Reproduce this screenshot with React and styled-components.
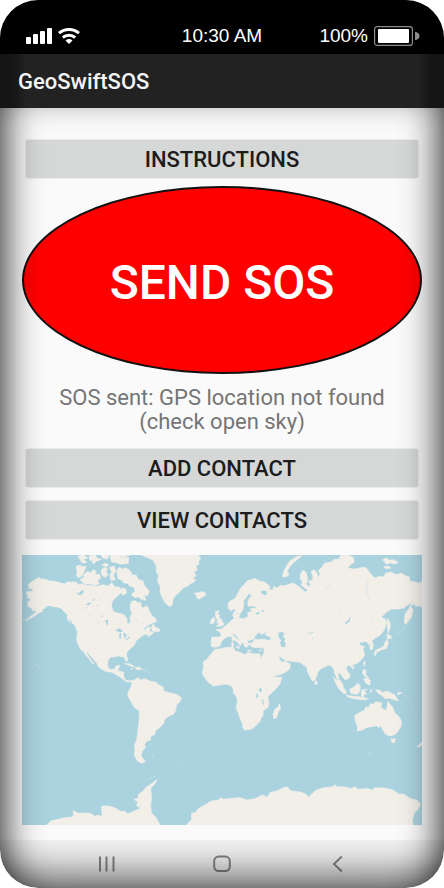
import React, { useState } from "react";
import styled, { createGlobalStyle } from "styled-components";

const App = () => {
  const [status] = useState("SOS sent: GPS location not found (check open sky)");

  return (
    <Phone>
      <GlobalStyle />
      <StatusBar>
        <Signals>
          <SignalIcon />
          <WifiIcon />
        </Signals>
        <span>10:30 AM</span>
        <Power>
          <span>100%</span>
          <BatteryIcon />
        </Power>
      </StatusBar>
      <Screen>
        <AppBar>
          <Title>GeoSwiftSOS</Title>
        </AppBar>
        <Content>
          <BarButton type="button">INSTRUCTIONS</BarButton>
          <SosButton type="button">SEND SOS</SosButton>
          <Message>{status}</Message>
          <ButtonStack>
            <BarButton type="button">ADD CONTACT</BarButton>
            <BarButton type="button">VIEW CONTACTS</BarButton>
          </ButtonStack>
          <WorldMap />
        </Content>
        <NavBar>
          <NavButton type="button" aria-label="Recent apps">
            <svg width="18" height="18" viewBox="0 0 18 18">
              <path d="M3 1.5v15M9.5 1.5v15M16.5 1.5v15" />
            </svg>
          </NavButton>
          <NavButton type="button" aria-label="Home">
            <svg width="18" height="18" viewBox="0 0 18 18">
              <rect x="1.2" y="1.6" width="15.6" height="14.4" rx="4.5" />
            </svg>
          </NavButton>
          <NavButton type="button" aria-label="Back">
            <svg width="18" height="18" viewBox="0 0 18 18">
              <path d="M12.8 1.6L5 9l7.800 7.400" />
            </svg>
          </NavButton>
        </NavBar>
        <EdgeShade />
      </Screen>
    </Phone>
  );
};

const SignalIcon = () => (
  <svg width="26" height="16" viewBox="0 0 26 16" fill="#fff">
    <rect x="0" y="9" width="5" height="7" rx="1" />
    <rect x="7" y="6" width="5" height="10" rx="1" />
    <rect x="14" y="3" width="5" height="13" rx="1" />
    <rect x="21" y="0" width="5" height="16" rx="1" />
  </svg>
);

const WifiIcon = () => (
  <svg width="22" height="16" viewBox="0 0 22 16" fill="none" stroke="#fff">
    <path d="M1 5.2C6.7 0.2 15.3 0.2 21 5.2" strokeWidth="3" />
    <path d="M4.8 9.5C8.3 6.5 13.7 6.5 17.2 9.5" strokeWidth="3" />
    <path d="M11 16L7.500 12.500Q11 9.700 14.500 12.500Z" fill="#fff" stroke="none" />
  </svg>
);

const BatteryIcon = () => (
  <svg width="46" height="20" viewBox="0 0 46 20">
    <rect x="0.6" y="0.6" width="37.8" height="18.8" rx="2.5" fill="none" stroke="#8c8c8c" strokeWidth="1.2" />
    <rect x="4" y="3" width="31" height="14" rx="1" fill="#fff" />
    <path d="M41 6c6 0 6 8 0 8z" fill="#8c8c8c" />
  </svg>
);

const land = [
  // north america
  "M40 104L47 98 55 92 63 88 70 82 78 87 90 88 104 93 120 94 136 99 150 102 158 95 165 97 180 95 190 103 202 102 215 106 235 108 250 108 262 104 280 108 290 98 300 110 315 112 320 126 305 140 294 150 290 162 290 172 296 185 310 190 320 192 328 196 336 206 336 218 342 222 346 214 345 200 351 190 345 175 347 162 350 154 362 152 368 158 378 158 378 168 385 174 392 168 398 170 402 182 410 196 422 206 425 214 412 220 398 226 384 238 390 240 400 230 407 233 402 244 412 246 420 242 414 250 400 260 396 252 386 254 372 265 362 274 358 286 350 292 340 302 333 312 336 322 338 332 333 334 327 320 318 320 310 317 300 321 290 320 280 328 277 345 281 355 288 359 298 357 303 348 315 346 310 356 310 363 326 367 326 380 332 391 342 393 350 390 346 396 335 396 326 389 315 381 300 372 290 366 280 366 268 362 256 355 250 350 246 340 236 328 228 320 218 308 213 306 217 314 224 325 232 335 238 342 229 337 222 326 212 316 207 306 196 298 192 288 186 276 185 262 188 245 184 240 182 228 172 220 168 210 160 205 156 192 148 186 140 176 128 171 112 170 105 166 94 169 88 176 82 177 83 184 70 190 58 198 45 206 30 212 50 197 62 188 64 182 53 182 50 174 40 170 38 157 48 150 37 142 40 137 33 130 40 124 52 125 54 118 42 114Z",
  "M410 230L415 222 420 232 432 236 435 243 425 245 418 241 411 242Z",
  "M157 199L162 208 166 218 158 210Z",
  // arctic islands
  "M183 50L195 45 203 50 214 49 208 62 200 78 190 83 184 76 187 65Z",
  "M195 88L208 82 205 74 219 64 226 70 234 59 244 64 240 74 253 73 257 84 247 92 253 101 239 106 222 101 208 102Z",
  "M258 60L268 53 277 56 273 68 280 72 272 82 261 76Z",
  "M283 53L298 48 302 62 295 75 301 89 288 91 285 76 290 65Z",
  "M305 62L314 52 324 58 333 53 347 64 350 74 364 76 369 88 384 93 388 106 403 125 397 137 387 134 393 151 379 148 370 141 360 143 348 133 360 125 358 113 344 108 338 100 326 99 321 91 309 86Z",
  "M189 19L207 15 218 24 204 28 216 37 202 40Z",
  "M222 18L241 15 246 25 259 28 244 34 236 42 230 31 224 31Z",
  "M258 15L282 16 277 27 264 25ZM285 18L305 15 315 22 341 23 340 40 317 43 304 38 290 36Z",
  "M288 15L345 15 331 20 300 19Z",
  "M260 45l12 -5 9 5-7 6zM323 113l10 5 1 12-11 5-8-9z",
  // greenland and iceland
  "M380 15L400 24 414 30 424 48 424 65 430 76 428 94 436 110 435 125 441 141 450 158 464 170 472 164 474 148 482 136 492 128 503 115 519 108 525 101 536 97 543 89 533 86 544 76 536 68 547 59 542 48 552 43 551 33 557 25 549 15Z",
  "M537 130L548 128 558 125 569 127 573 134 563 141 553 147 543 142 545 136Z",
  // british isles
  "M602 184L612 182 608 191 614 195 612 203 620 209 622 217 628 221 622 228 604 229 611 222 605 217 610 210 603 205 602 195Z",
  "M588 209L597 202 600 211 596 219 586 222Z",
  // europe and asia
  "M590 262L610 261 619 258 616 247 603 239 616 238 626 232 637 223 645 216 651 209 658 207 653 195 657 187 665 178 666 190 675 196 670 203 685 206 692 203 700 200 698 188 710 184 706 176 730 173 715 168 700 169 698 157 703 145 710 137 702 130 695 140 686 151 686 163 684 177 678 189 670 192 664 180 657 176 648 183 640 175 639 160 648 151 659 147 668 132 675 117 688 103 698 91 709 89 720 85 732 93 748 96 763 107 765 115 755 122 738 120 738 130 750 138 757 130 755 120 774 119 776 109 785 114 796 107 810 107 824 102 835 99 849 108 861 117 869 125 879 124 874 117 859 106 862 95 855 85 858 68 866 60 873 68 878 86 874 102 882 112 886 103 879 94 893 90 894 78 888 66 895 59 904 65 908 76 913 81 915 69 909 63 922 51 928 40 948 36 959 28 972 28 976 17 996 15 1014 21 1018 36 1004 46 998 55 1021 57 1038 53 1052 52 1062 65 1072 78 1081 84 1092 79 1105 81 1112 70 1126 66 1145 74 1161 70 1171 77 1182 80 1185 93 1200 96 1211 100 1221 95 1221 170 1210 167 1201 169 1198 160 1186 169 1194 179 1189 201 1173 222 1168 219 1170 192 1182 177 1190 158 1176 166 1166 174 1150 177 1128 177 1115 186 1098 202 1111 207 1115 216 1108 239 1096 255 1081 264 1070 273 1075 283 1072 298 1066 299 1064 287 1059 279 1049 274 1040 278 1034 273 1034 285 1049 290 1044 297 1049 315 1041 328 1027 340 1016 343 1011 350 999 346 993 353 997 364 1005 374 1003 384 991 390 982 380 976 370 969 370 971 387 980 397 985 409 975 405 968 392 963 378 958 369 957 358 948 347 940 345 932 350 920 354 909 365 906 376 900 390 892 393 885 380 877 364 875 350 866 346 855 337 832 334 812 332 798 322 790 318 795 331 802 337 811 334 826 343 824 357 806 370 786 376 769 380 760 368 753 354 744 339 738 325 746 312 748 295 734 292 722 293 709 290 703 282 714 276 719 267 731 269 744 267 764 272 769 263 757 257 750 253 757 245 745 250 741 254 732 247 721 257 717 266 704 271 696 272 703 283 697 291 690 291 685 280 675 273 666 259 656 250 654 257 667 267 681 279 675 288 671 279 655 269 649 258 637 260 627 266 620 274 614 289 597 292 588 288Z",
  "M649 280l6-2 1 10-5 2zM662 289l11 1-2 6zM650 266l4 0-1 9zM698 300l13 2-12 2zM732 302l8-3-5 5z",
  "M803 80L806 64 815 47 825 32 845 20 861 17 850 26 834 39 823 52 816 65 823 73 813 81Z",
  "M1103 29L1113 24 1124 31 1136 29 1149 38 1138 42 1126 38 1115 43ZM1107 50l13-1 8 5-16 2z",
  // japan, philippines, indonesia
  "M1118 205L1124 215 1126 229 1120 249 1117 231ZM1116 252L1126 257 1131 263 1118 267ZM1117 268L1120 281 1113 296 1099 300 1086 306 1079 302 1097 294 1106 289 1110 277ZM1077 307l9 0-6 11z",
  "M1045 337l6-2-3 14zM1010 352l7-2-3 8zM1044 359l9 1-1 14 9 10-10-3-8-11zM1046 388l12-4 8 7-2 14-11-5zM901 391l6 6-3 7-5-3z",
  "M954 380L970 396 986 413 995 429 987 431 974 419 963 401ZM993 435L1013 439 1032 440 1060 446 1052 450 1023 447 1000 442Z",
  "M1004 417L1014 413 1029 400 1036 409 1035 423 1027 433 1008 431ZM1040 421l17-4-10 7 8 8-8 1-2 9-6-5zM1066 417l5 7-4 4z",
  "M1082 419L1096 421 1103 429 1114 423 1130 430 1140 436 1150 452 1132 448 1123 444 1112 447 1102 437 1090 430Z",
  "M1146 430l11-4 3 3-11 5z",
  // australia and new zealand
  "M1020 495L1036 487 1048 481 1053 470 1061 473 1066 461 1075 463 1082 455 1101 459 1097 471 1112 482 1116 472 1119 454 1126 464 1134 474 1139 489 1150 498 1159 512 1158 528 1149 544 1141 553 1126 558 1112 553 1105 542 1100 534 1098 525 1092 533 1085 527 1067 530 1053 533 1045 539 1027 543 1028 529 1020 511Z",
  "M1128 567L1142 567 1138 578 1131 577ZM1205 590L1221 577 1221 586 1211 591Z",
  // africa
  "M600 298L613 297 630 293 655 291 659 302 674 307 689 314 698 307 718 312 735 312 737 325 745 342 754 356 762 368 772 381 800 382 795 402 782 417 764 434 758 441 762 457 759 472 744 483 744 498 738 503 735 514 722 528 711 537 696 539 689 541 684 534 682 520 674 503 670 488 663 474 668 454 664 440 656 430 654 413 645 406 632 402 614 405 595 408 580 397 568 382 562 369 566 350 564 337 577 327 586 314Z",
  "M793 461L797 474 790 486 784 504 776 506 774 492 780 477 789 472Z",
  // south america and caribbean
  "M350 393L364 387 368 382 376 390 390 386 405 393 423 397 433 406 444 410 446 423 466 429 484 433 499 443 494 456 484 466 482 482 475 493 458 500 449 509 445 521 434 533 421 542 419 554 405 560 408 569 394 574 388 584 392 592 382 603 378 617 391 635 380 640 367 633 358 615 360 600 358 587 365 569 369 543 371 522 373 500 373 482 358 472 349 456 338 437 340 425 348 411Z",
  "M328 341l15 0 17 9-8 0-12-5zM360 353l11-2 9 6-12 3zM347 355l6 1-3 2z",
  // antarctica
  "M95 825L108 812 125 809 149 803 167 802 175 798 175 782 188 789 210 789 227 790 239 799 250 795 261 800 260 768 280 768 301 774 316 784 330 784 338 792 350 786 370 778 377 774 364 767 369 756 357 748 371 745 369 734 384 724 394 711 408 702 426 689 418 704 407 714 410 743 407 766 409 788 424 804 435 825Z",
  "M515 825L530 808 530 790 542 787 551 775 575 762 586 754 610 750 618 743 624 748 651 745 675 743 695 750 719 746 731 741 740 735 751 738 755 744 765 728 785 723 803 714 817 711 828 723 851 725 870 731 881 741 903 721 922 714 953 710 960 704 965 710 990 711 1008 716 1020 710 1028 718 1058 716 1074 720 1079 713 1107 714 1132 719 1153 733 1165 732 1186 746 1205 750 1217 763 1209 778 1198 788 1192 810 1194 825Z",
];

const water = [
  "M300 241L313 235 325 244 313 247ZM313 251L318 248 318 267 313 265ZM326 247L335 255 330 266 326 257ZM331 269L343 259 344 263 334 271ZM268 210L279 209 279 222 275 227 273 216Z",
  "M183 126L192 130 201 119 207 124 203 132 193 136ZM213 164L225 156 228 161 218 166ZM231 151L242 144 236 153ZM258 196l8 2-5 4zM246 164l4 1-2 5z",
  "M790 249L801 245 809 250 803 258 811 267 807 273 812 281 810 291 799 290 795 278 799 272 791 262Z",
  "M989 219L998 212 1007 199 1004 213 994 222ZM879 249L899 247 884 251ZM891 263l3 0 0 4-3 0z",
  "M731 417L738 414 741 421 735 429ZM724 433L728 430 730 440 724 445ZM741 449L744 447 747 465 743 463Z",
  "M722 191l8-6 5 4-8 6zM738 184l7-5 2 7z",
];

const WorldMap = () => (
  <MapView viewBox="21 15 1200 810" role="img" aria-label="World map">
    <rect x="21" y="15" width="1200" height="810" fill="#aad3df" />
    <g fill="#f2efe9" stroke="#f2efe9" strokeWidth="2" strokeLinejoin="round">
      {land.map((d, i) => (
        <path d={d} key={i} />
      ))}
    </g>
    {/* chains of small islands */}
    <g fill="none" stroke="#dce5e5" strokeWidth="3" strokeDasharray="5 5">
      <path d="M22 213L48 203M60 344L78 355M22 128L22 155M375 353L408 370M1160 429L1186 448M1195 485L1208 495M1143 254L1170 232M405 685L426 677M489 633L494 637M410 619L417 618M1063 608L1070 609" />
    </g>
    <g fill="#aad3df">
      {water.map((d, i) => (
        <path d={d} key={i} />
      ))}
    </g>
    <g fill="none" stroke="#cde0e2" strokeWidth="2">
      <path d="M173 117l10 3M205 176l14-4M240 125l5 6M254 148l7-4M268 184l5-5M221 196l8-4M280 160l4 8M247 215l7 8M1059 95Q1048 120 1063 148M930 114l17-8M970 180l8 8-4 8M1008 151l6 4M942 223l4 5M829 267l5-2M971 288l5 3M1069 205l6 2M350 235l8-8M362 210l8 3M379 221l7-5" />
    </g>
  </MapView>
);

const GlobalStyle = createGlobalStyle`
  * {
    box-sizing: border-box;
  }
  body {
    margin: 0;
    background: #fff;
    font-family: Roboto, "Liberation Sans", sans-serif;
  }
  button {
    border: 0;
    padding: 0;
    font-family: inherit;
    cursor: pointer;
  }
`;

const Phone = styled.div`
  display: flex;
  flex-direction: column;
  min-height: 100vh;
  border-radius: 38px;
  overflow: hidden;
  background: #fafafa;
`;

const StatusBar = styled.header`
  display: grid;
  grid-template-columns: 1fr auto 1fr;
  align-items: center;
  height: 54px;
  padding: 18px 24px 0;
  background: #000;
  color: #fff;
  font-family: "Liberation Sans", Arial, sans-serif;
  font-size: 19px;
`;

const Signals = styled.div`
  display: flex;
  align-items: center;
  gap: 6px;
  padding-left: 2px;
`;

const Power = styled(Signals)`
  justify-content: flex-end;
`;

const Screen = styled.div`
  position: relative;
  flex: 1;
  display: flex;
  flex-direction: column;
`;

const AppBar = styled.div`
  position: relative;
  z-index: 1;
  display: flex;
  align-items: center;
  height: 54px;
  padding: 0 18px;
  background: linear-gradient(
    to right,
    #141414,
    #161616 14px,
    #222 26px,
    #222 calc(100% - 26px),
    #161616 calc(100% - 14px),
    #141414
  );
`;

const Title = styled.h1`
  margin: 0;
  color: #f4f4f4;
  font-size: 22px;
  font-weight: 500;
`;

const Content = styled.main`
  flex: 1;
  display: flex;
  flex-direction: column;
  padding: 32px 22px 15px;
`;

const BarButton = styled.button`
  height: 38px;
  margin: 0 4px;
  border-radius: 2px;
  background: #d6d7d7;
  box-shadow: 0 0 2px rgba(0, 0, 0, 0.2);
  color: #1c1c1c;
  font-size: 22px;
  font-weight: 500;
`;

const SosButton = styled.button`
  height: 188px;
  margin-top: 8px;
  && {
    padding-top: 4px;
    border: 2px solid #111;
  }
  border-radius: 50%;
  background: #f00;
  color: #fff;
  font-size: 48px;
  font-weight: 500;
`;

const Message = styled.p`
  margin: 12px 24px 15px;
  color: #757575;
  font-size: 22px;
  line-height: 24px;
  text-align: center;
`;

const ButtonStack = styled.div`
  display: flex;
  flex-direction: column;
  gap: 14px;
  margin-bottom: 16px;
`;

const MapView = styled.svg`
  display: block;
  width: 100%;
`;

const NavBar = styled.nav`
  display: grid;
  grid-template-columns: repeat(3, 1fr);
  height: 48px;
  padding: 0 48px;
  background: linear-gradient(#f0f0f0, #e0e0e0 60%, #f0f0f0);
`;

const NavButton = styled.button`
  display: grid;
  place-items: center;
  background: none;

  svg {
    fill: none;
    stroke: #7c7c7c;
    stroke-width: 2;
  }
`;

// dark vignette lying over the screen, its top edge tucked under the app bar
const EdgeShade = styled.div`
  position: absolute;
  inset: 32px 0 0;
  border-radius: 0 0 38px 38px;
  box-shadow: inset 0 0 40px #000;
  pointer-events: none;
`;

export default App;
